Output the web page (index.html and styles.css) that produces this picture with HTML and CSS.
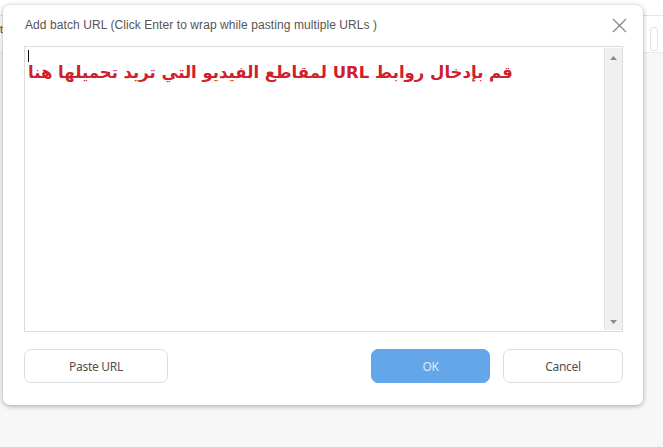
FILE: index.html
```html
<!DOCTYPE html>
<html>
<head>
<meta charset="utf-8">
<link rel="stylesheet" href="styles.css">
</head>
<body>
<div class="page">
  <div class="topbar">
    <div class="topline"></div>
    <div class="topbox"></div>
  </div>
  <div class="side-mark">t</div>
</div>
<div class="dialog">
  <div class="dialog-head">
    <span class="dialog-title">Add batch URL (Click Enter to wrap while pasting multiple URLs )</span>
    <svg class="close" width="15" height="15" viewBox="0 0 15 15"><path d="M1 1 L14 14 M14 1 L1 14" stroke="#8a8a8a" stroke-width="1.3" fill="none"/></svg>
  </div>
  <div class="textbox">
    <div class="text-area">
      <div class="caret"></div>
      <div class="arabic" dir="rtl">قم بإدخال روابط URL لمقاطع الفيديو التي تريد تحميلها هنا</div>
    </div>
    <div class="scrollbar">
      <svg width="7" height="4" viewBox="0 0 7 4"><path d="M0 4 L3.5 0 L7 4 Z" fill="#8c8c8c"/></svg>
      <svg width="7" height="4" viewBox="0 0 7 4"><path d="M0 0 L3.5 4 L7 0 Z" fill="#8c8c8c"/></svg>
    </div>
  </div>
  <div class="dialog-foot">
    <button class="btn btn-paste">Paste URL</button>
    <div class="foot-right">
      <button class="btn btn-ok">OK</button>
      <button class="btn btn-cancel">Cancel</button>
    </div>
  </div>
</div>
</body>
</html>
```
FILE: styles.css
```css
html, body {
  margin: 0;
  padding: 0;
}
body {
  width: 663px;
  height: 447px;
  background: #f7f7f7;
  font-family: "Liberation Sans", Arial, sans-serif;
  overflow: hidden;
  position: relative;
}
.page {
  width: 663px;
  height: 447px;
}
.topbar {
  height: 52px;
  background: #ffffff;
  border-bottom: 1px solid #ececec;
  position: relative;
}
.topline {
  height: 15px;
  border-bottom: 1px solid #e6e6e6;
}
.topbox {
  position: absolute;
  left: 650px;
  top: 27px;
  width: 6px;
  height: 22px;
  border: 1px solid #e2e2e2;
  border-radius: 3px;
}
.side-mark {
  position: absolute;
  left: 0;
  top: 24px;
  font-size: 10px;
  color: #444;
}
.dialog {
  position: absolute;
  left: 3px;
  top: 5px;
  width: 640px;
  height: 400px;
  box-sizing: border-box;
  background: #ffffff;
  border-radius: 7px;
  box-shadow: 0 1px 5px rgba(0, 0, 0, 0.35);
  padding: 0 20px 0 21px;
  display: flex;
  flex-direction: column;
}
.dialog-head {
  height: 41px;
  display: flex;
  align-items: center;
  justify-content: space-between;
  padding-left: 1px;
}
.dialog-title {
  font-size: 12px;
  color: #555555;
  letter-spacing: 0.08px;
  margin-top: -1px;
}
.close {
  margin-right: -4px;
}
.textbox {
  height: 286px;
  box-sizing: border-box;
  border: 1px solid #dcdcdc;
  display: flex;
}
.text-area {
  flex: 1;
  padding: 3px 0 0 3px;
}
.caret {
  width: 1px;
  height: 12px;
  background: #111;
}
.arabic {
  display: inline-block;
  font-family: "DejaVu Sans", sans-serif;
  font-weight: bold;
  font-size: 16.5px;
  color: #d0202a;
  line-height: 22px;
}
.scrollbar {
  width: 17px;
  background: #f0f0f0;
  border-left: 1px solid #e4e4e4;
  display: flex;
  flex-direction: column;
  justify-content: space-between;
  align-items: center;
  padding: 8px 0 6px;
  margin: 1px 0;
}
.dialog-foot {
  margin-top: 17px;
  display: flex;
  justify-content: space-between;
}
.foot-right {
  display: flex;
  gap: 13px;
}
.btn {
  height: 34px;
  border-radius: 7px;
  border: 1px solid #dedede;
  background: #ffffff;
  font-family: "Noto Sans", "Open Sans", sans-serif;
  font-size: 12px;
  color: #505050;
  padding: 0;
  letter-spacing: -0.3px;
}
.btn-paste {
  width: 144px;
}
.btn-ok {
  width: 119px;
  background: #63a6e9;
  border-color: #63a6e9;
  color: #dcebfa;
}
.btn-cancel {
  width: 120px;
}
```
